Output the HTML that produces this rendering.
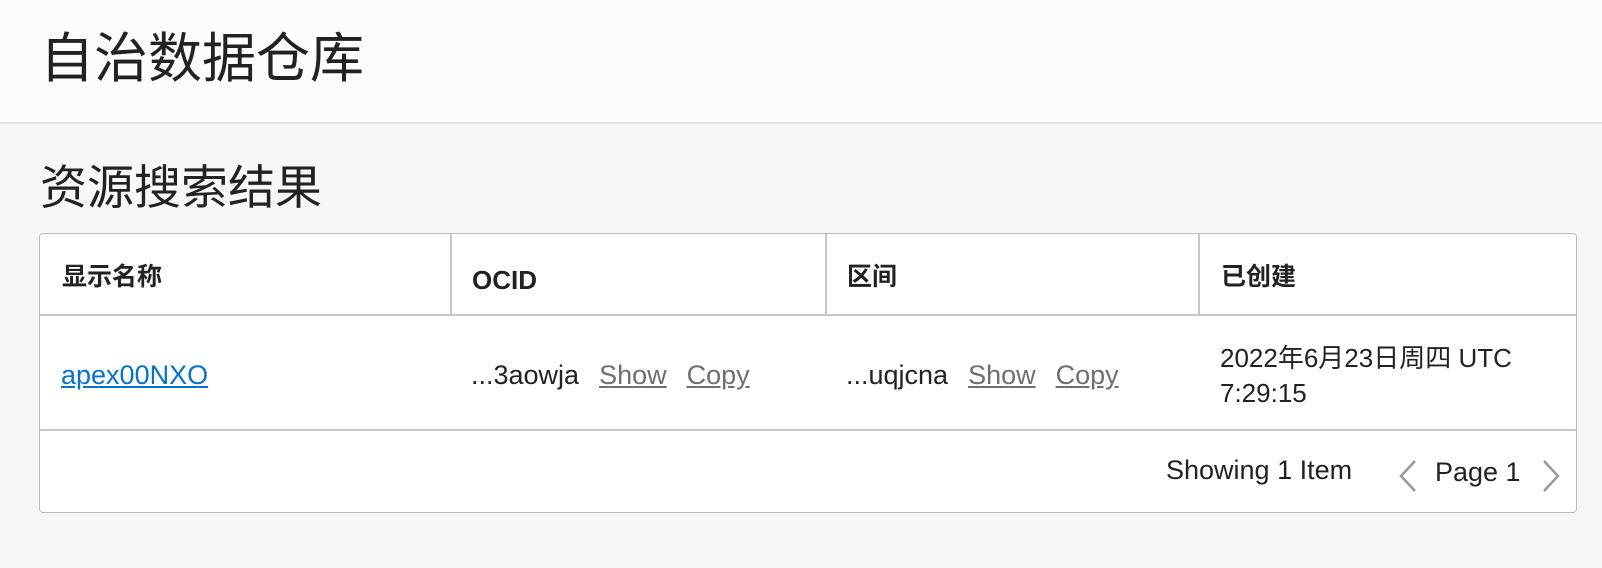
<!DOCTYPE html>
<html><head><meta charset="utf-8"><style>
*{margin:0;padding:0;box-sizing:border-box}
body{width:1602px;height:568px;background:#f7f7f7;font-family:"Liberation Sans","Noto Sans CJK SC",sans-serif;color:#222;position:relative;overflow:hidden}
.hdr{position:absolute;left:0;top:0;width:1602px;height:124px;background:#fcfcfc;border-bottom:2px solid #e6e6e6}
.t1{position:absolute;left:40px;top:32px;font-size:54px;line-height:1;color:#222}
.t2{position:absolute;left:40px;top:164px;font-size:47px;line-height:1;color:#222}
.tbl{position:absolute;left:39px;top:233px;width:1538px;height:280px;background:#fff;border:1.5px solid #b8bcc4;border-radius:4px}
.hline{position:absolute;left:0;width:100%;height:2px;background:#c4c7cd}
.v{position:absolute;top:0;width:2px;height:82px;background:#c4c7cd}
.th{position:absolute;top:31px;font-size:25px;line-height:1;font-weight:700;color:#222}
.td{position:absolute;font-size:26px;line-height:1;color:#222}
.r{font-size:27px}
.lk{color:#6f6f6f;text-decoration:underline;margin-left:20px}
</style></head><body>
<div class="hdr"><div class="t1">自治数据仓库</div></div>
<div class="t2">资源搜索结果</div>
<div class="tbl">
 <div class="v" style="left:410px"></div>
 <div class="v" style="left:785px"></div>
 <div class="v" style="left:1158px"></div>
 <div class="hline" style="top:80px"></div>
 <div class="hline" style="top:195px"></div>
 <div class="th" style="left:22px">显示名称</div>
 <div class="th" style="left:432px;top:33px;font-size:26px">OCID</div>
 <div class="th" style="left:807px">区间</div>
 <div class="th" style="left:1181px">已创建</div>
 <div class="td r" style="left:21px;top:128px;color:#0572ce;text-decoration:underline">apex00NXO</div>
 <div class="td r" style="left:431px;top:128px">...3aowja<span class="lk">Show</span><span class="lk">Copy</span></div>
 <div class="td r" style="left:806px;top:128px">...uqjcna<span class="lk">Show</span><span class="lk">Copy</span></div>
 <div class="td" style="left:1180px;top:107px;line-height:35px">2022年6月23日周四 UTC<br>7:29:15</div>
 <div class="td r" style="left:1126px;top:223px">Showing 1 Item</div>
 <svg style="position:absolute;left:1357px;top:225px" width="22" height="34"><path d="M18 2 L4 17 L18 32" fill="none" stroke="#999" stroke-width="2.5"/></svg>
 <div class="td r" style="left:1395px;top:225px">Page 1</div>
 <svg style="position:absolute;left:1500px;top:225px" width="22" height="34"><path d="M4 2 L18 17 L4 32" fill="none" stroke="#999" stroke-width="2.5"/></svg>
</div>
</body></html>
